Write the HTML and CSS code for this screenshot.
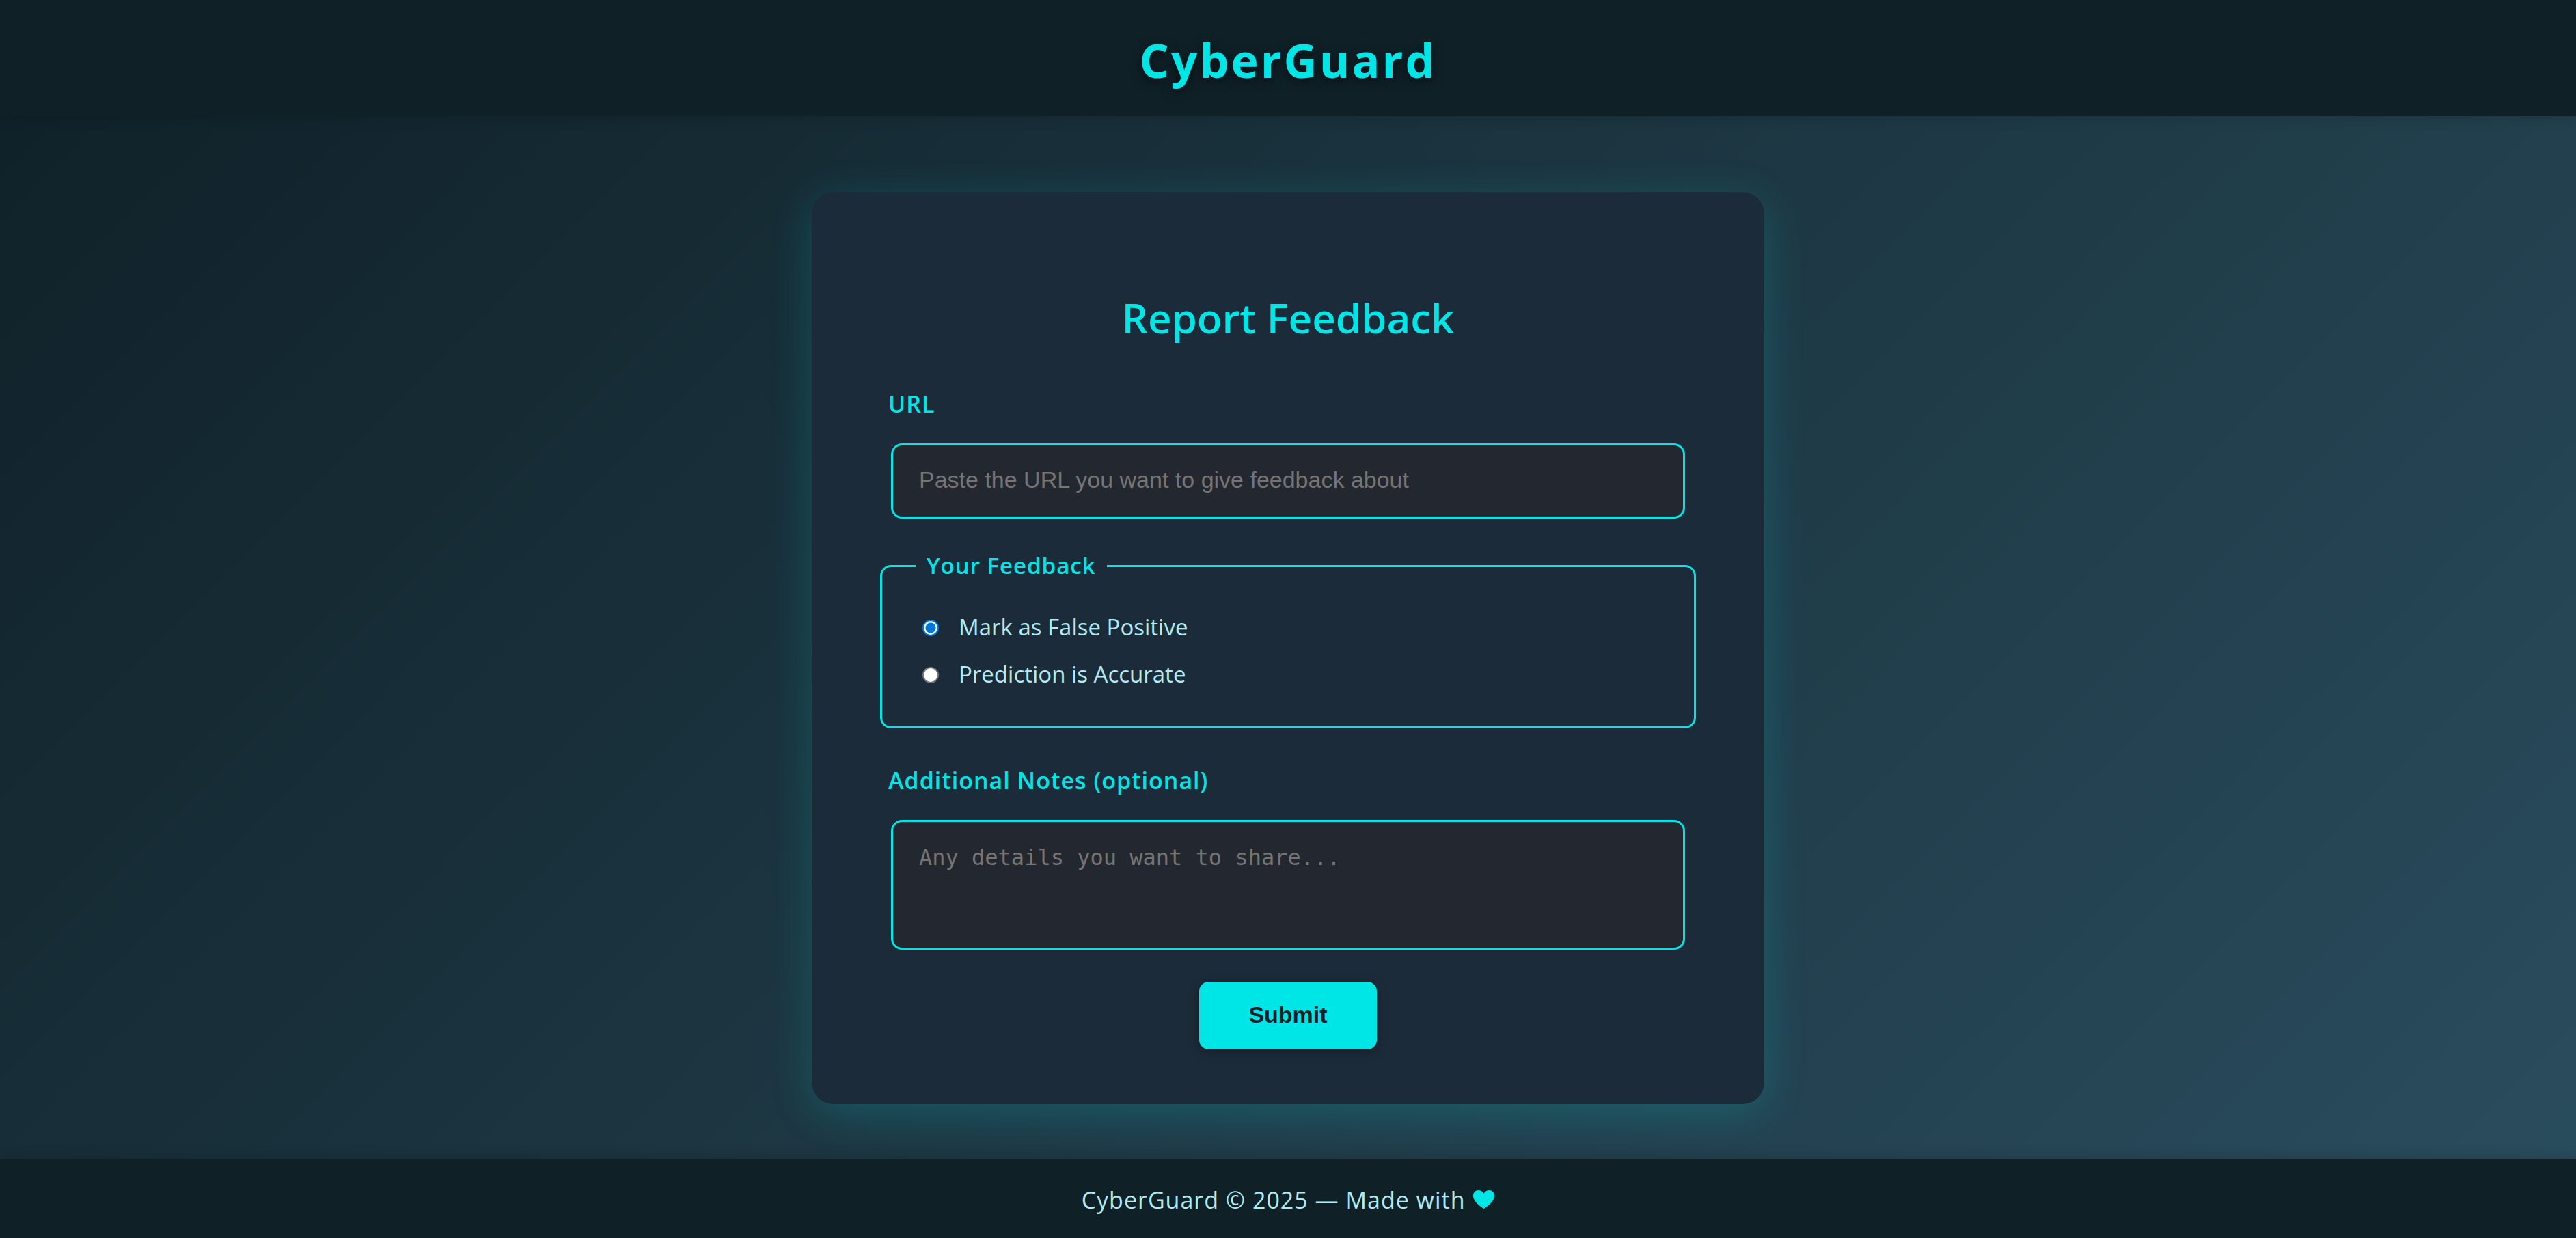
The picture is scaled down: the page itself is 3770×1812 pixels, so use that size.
FILE: index.html
```html
<!DOCTYPE html>
<html lang="en">
<head>
  <meta charset="utf-8">
  <meta name="viewport" content="width=device-width, initial-scale=1">
  <title>CyberGuard</title>
  <link rel="stylesheet" href="styles.css">
</head>
<body>
  <header class="site-header">
    <h1 class="brand">CyberGuard</h1>
  </header>

  <main class="content">
    <section class="card">
      <h2 class="card-title">Report Feedback</h2>
      <form class="feedback-form">
        <label class="field-label" for="url">URL</label>
        <input class="field" type="url" id="url" name="url" placeholder="Paste the URL you want to give feedback about">

        <fieldset class="choices">
          <legend class="choices-legend">Your Feedback</legend>
          <div class="choice-list">
            <label class="choice">
              <input class="radio" type="radio" name="feedback" value="false_positive" checked>
              <span>Mark as False Positive</span>
            </label>
            <label class="choice">
              <input class="radio" type="radio" name="feedback" value="accurate">
              <span>Prediction is Accurate</span>
            </label>
          </div>
        </fieldset>

        <label class="field-label" for="notes">Additional Notes (optional)</label>
        <textarea class="field notes" id="notes" name="notes" placeholder="Any details you want to share..."></textarea>

        <button class="submit" type="submit">Submit</button>
      </form>
    </section>
  </main>

  <footer class="site-footer">
    <p class="credit">CyberGuard © 2025 — Made with
      <svg class="heart" viewBox="0 0 31 27" role="img" aria-label="love"><path d="M15.500 27C13 25.500 0 17.500 0 8C0 3.200 3.500 0 7.500 0C11 0 14 1.800 15.500 5C17 1.800 20 0 23.500 0C27.500 0 31 3.200 31 8C31 17.500 18 25.500 15.500 27Z"/></svg>
    </p>
  </footer>
</body>
</html>
```
FILE: styles.css
```css
:root {
  --accent: #00e6e6;
  --dark: #0f2027;
  --card: #1c2b3a;
  --field: #23272f;
  --text: #b2ebf2;
}

* {
  box-sizing: border-box;
}

body {
  margin: 0;
  min-height: 100vh;
  display: flex;
  flex-direction: column;
  background: linear-gradient(135deg, #0f2027, #2a4d5e);
  color: var(--text);
  font-family: "Segoe UI", "Open Sans", "Noto Sans", sans-serif;
}

.site-header {
  padding: 38px 24px 32px;
  background: var(--dark);
  box-shadow: 0 3px 18px rgba(0, 0, 0, 0.15);
  text-align: center;
}

.brand {
  margin: 0;
  color: var(--accent);
  font-size: 68px;
  font-weight: 700;
  line-height: 100px;
  letter-spacing: 3px;
  text-shadow: 0 4px 16px rgba(0, 0, 0, 0.5);
}

.content {
  flex: 1;
  padding: 111px 24px 80px;
}

.card {
  max-width: 1394px;
  margin: 0 auto;
  padding: 142px 100px 80px;
  border-radius: 32px;
  background: var(--card);
  box-shadow: 0 12px 64px rgba(0, 230, 230, 0.2);
}

.card-title {
  margin: 0 0 60px;
  color: var(--accent);
  font-size: 60px;
  font-weight: 600;
  line-height: 84px;
  text-align: center;
}

.feedback-form {
  display: flex;
  flex-direction: column;
}

.field-label {
  margin: 0 12px 34px;
  color: var(--accent);
  font-size: 34px;
  font-weight: 600;
  line-height: 48px;
  letter-spacing: 1px;
}

.field {
  height: 110px;
  margin: 0 16px;
  padding: 30px 38px 34px;
  border: 3px solid var(--accent);
  border-radius: 16px;
  background: var(--field);
  color: var(--text);
  font-family: "Liberation Sans", Arial, sans-serif;
  font-size: 34px;
  outline: none;
}

.field::placeholder {
  color: #757575;
}

.notes {
  height: 190px;
  padding-top: 32px;
  font-family: "DejaVu Sans Mono", monospace;
  font-size: 32px;
  line-height: 40px;
  resize: none;
}

.choices {
  min-width: 0;
  margin: 45px 0 52px;
  padding: 42px 49px 52px;
  border: 3px solid var(--accent);
  border-radius: 16px;
}

.choices-legend {
  padding: 0 16px;
  color: var(--accent);
  font-size: 33px;
  font-weight: 600;
  line-height: 48px;
  letter-spacing: 1px;
}

.choice-list {
  display: flex;
  flex-direction: column;
  align-items: flex-start;
  gap: 21px;
  padding-left: 10px;
}

.choice {
  display: flex;
  align-items: center;
  gap: 29px;
  font-size: 33px;
  line-height: 48px;
}

.radio {
  appearance: none;
  width: 24px;
  height: 24px;
  margin: 2px 0 0;
  border: 2px solid #767676;
  border-radius: 50%;
  background: #fff;
}

.radio:checked {
  border-color: #0078d7;
  background: radial-gradient(circle, #0078d7 7px, #fff 8px);
}

.submit {
  align-self: center;
  margin-top: 47px;
  padding: 29px 72px 31px;
  border: 0;
  border-radius: 14px;
  background: var(--accent);
  box-shadow: 0 4px 16px rgba(0, 0, 0, 0.3);
  color: var(--dark);
  font-family: "Liberation Sans", Arial, sans-serif;
  font-size: 34px;
  font-weight: 700;
  line-height: 39px;
}

.site-footer {
  padding: 36px 24px 32px;
  background: var(--dark);
  box-shadow: 0 -3px 18px rgba(0, 0, 0, 0.15);
  text-align: center;
}

.credit {
  margin: 0;
  font-size: 34px;
  line-height: 48px;
  letter-spacing: 1px;
}

.heart {
  width: 31px;
  height: 27px;
  margin-left: 2px;
  fill: var(--accent);
}
```
